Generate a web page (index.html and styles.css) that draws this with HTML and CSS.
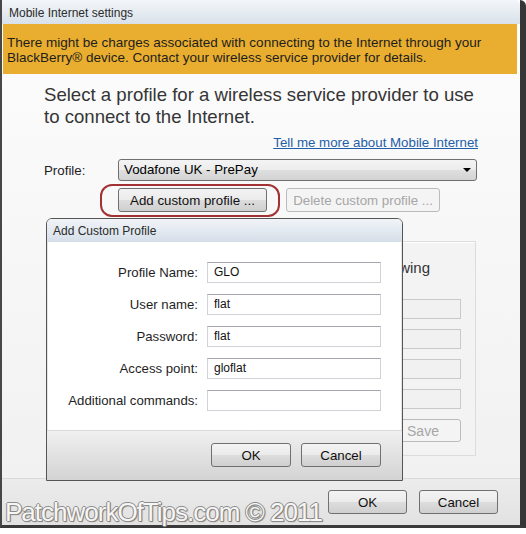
FILE: index.html
```html
<!DOCTYPE html>
<html lang="en">
<head>
    <meta charset="UTF-8">
    <title>Mobile Internet settings</title>
    <link rel="stylesheet" href="styles.css">
</head>
<body>

<div class="window">
    <div class="titlebar">Mobile Internet settings</div>
    <div class="notice">There might be charges associated with connecting to the Internet through your<br>BlackBerry® device. Contact your wireless service provider for details.</div>

    <div class="content">
        <h1>Select a profile for a wireless service provider to use<br>to connect to the Internet.</h1>
        <div class="more"><a href="#">Tell me more about Mobile Internet</a></div>

        <div class="profile-row">
            <span class="profile-label">Profile:</span>
            <div class="select">Vodafone UK - PrePay<span class="arrow"></span></div>
        </div>

        <div class="profile-actions">
            <span class="highlight"><button class="btn btn-add">Add custom profile ...</button></span>
            <button class="btn btn-delete" disabled>Delete custom profile ...</button>
        </div>

        <div class="group">
            <div class="group-intro">Type the following</div>
            <div class="group-field"></div>
            <div class="group-field"></div>
            <div class="group-field"></div>
            <div class="group-field"></div>
            <button class="btn btn-save" disabled>Save</button>
        </div>
    </div>

    <div class="footer">
        <button class="btn btn-footer">OK</button>
        <button class="btn btn-footer">Cancel</button>
    </div>

    <div class="watermark">PatchworkOfTips.com © 2011</div>

    <div class="dialog">
        <div class="dialog-title">Add Custom Profile</div>
        <div class="dialog-body">
            <div class="row"><label>Profile Name:</label><div class="input">GLO</div></div>
            <div class="row"><label>User name:</label><div class="input">flat</div></div>
            <div class="row"><label>Password:</label><div class="input">flat</div></div>
            <div class="row"><label>Access point:</label><div class="input">gloflat</div></div>
            <div class="row"><label>Additional commands:</label><div class="input"></div></div>
        </div>
        <div class="dialog-footer">
            <button class="btn btn-dialog">OK</button>
            <button class="btn btn-dialog">Cancel</button>
        </div>
    </div>
</div>

</body>
</html>
```

FILE: styles.css
```css
body { margin: 0; background: #fff; font-family: "Liberation Sans", Arial, sans-serif; color: #1e1e1e; }

.window { position: relative; width: 518px; border-left: 2px solid #474747; border-right: 6px solid #363636; border-bottom: 3px solid #3a3a3a; border-top-right-radius: 6px; background: linear-gradient(#fdfdfd, #f0f0f0); }

.titlebar { height: 24px; line-height: 27px; padding-left: 7px; font-size: 12px; color: #2b2b2b; background: linear-gradient(#f3f6f9, #d8e1ea); border-top-right-radius: 5px; }

.notice { height: 50px; box-sizing: border-box; margin: 0 3px 0 1px; padding: 11px 0 0 4px; font-size: 13.5px; line-height: 15px; color: #1d1d1d; background: #e9ae2f; }

.content { padding: 10px 42px 0 42px; }
h1 { margin: 0; font-size: 18.6px; font-weight: normal; line-height: 22px; color: #353535; }
.more { margin-top: 7px; text-align: right; font-size: 13.3px; line-height: 16px; }
.more a { color: #1f5ea8; }

.profile-row { margin-top: 8px; display: flex; align-items: center; height: 22px; }
.profile-label { width: 74px; font-size: 13.3px; }
.select { position: relative; flex: 1; height: 22px; box-sizing: border-box; margin-right: 1px; padding-left: 5px; font-size: 13.3px; line-height: 20px; color: #000; border: 1px solid #707070; border-radius: 3px; background: linear-gradient(#f4f4f4 0%, #ececec 50%, #dfdfdf 51%, #d3d3d3 100%); }
.arrow { position: absolute; right: 5px; top: 8px; border-left: 4px solid transparent; border-right: 4px solid transparent; border-top: 4px solid #000; }

.profile-actions { margin-top: 7px; padding-left: 74px; display: flex; gap: 19px; height: 24px; }
.highlight { position: relative; }
.highlight::after { content: ""; position: absolute; left: -18px; right: -13px; top: -4px; bottom: -5px; border: 2px solid #a23232; border-radius: 12px; }

.btn { height: 24px; padding: 0; font-family: "Liberation Sans", Arial, sans-serif; font-size: 13.3px; color: #111; border: 1px solid #707070; border-radius: 3px; background: linear-gradient(#f3f3f3 0%, #ebebeb 50%, #dddddd 51%, #cfcfcf 100%); }
.btn:disabled { color: #a6a6a6; border-color: #b8bcbf; background: #f4f4f4; }
.btn-add { width: 149px; }
.btn-delete { width: 154px; }

.group { margin: 29px 2px 0 56px; height: 215px; box-sizing: border-box; padding: 17px 14px 0 0; display: flex; flex-direction: column; align-items: flex-end; gap: 10px; border: 1px solid #dcdcdc; box-shadow: inset 1px 1px 0 #fff; background: #f3f3f3; }
.group-intro { align-self: stretch; text-align: right; padding-right: 31px; margin-bottom: 12px; font-size: 15px; line-height: 18px; color: #333; }
.group-field { width: 200px; height: 20px; box-sizing: border-box; border: 1px solid #c9c9c9; background: #f1f1f1; }
.btn-save { width: 76px; height: 23px; font-size: 14px; }

.footer { margin-top: 22px; height: 47px; box-sizing: border-box; padding: 11px 22px 0 0; display: flex; justify-content: flex-end; gap: 12px; background: linear-gradient(#ececec, #e2e2e2); border-top: 1px solid #dadada; }
.btn-footer { width: 79px; }

.watermark { position: absolute; left: 3px; top: 499px; font-size: 26px; line-height: 26px; letter-spacing: -1px; color: #f6f6f6; text-shadow: 1px 0 0 #8c8c8c, -1px 0 0 #8c8c8c, 0 1px 0 #8c8c8c, 0 -1px 0 #8c8c8c, 1px 1px 1px #666; }

.dialog { position: absolute; left: 44px; top: 218px; width: 357px; height: 263px; box-sizing: border-box; display: flex; flex-direction: column; border: 1px solid #555; border-radius: 6px 6px 0 0; background: #fff; }
.dialog-title { height: 23px; line-height: 25px; padding-left: 6px; font-size: 12px; color: #2b2b2b; background: linear-gradient(#f1f4f8, #d5dfe9); border-radius: 5px 5px 0 0; }
.dialog-body { flex: 1; padding-top: 20px; display: flex; flex-direction: column; gap: 11px; border-left: 1px solid #e4e4e4; border-right: 1px solid #e4e4e4; }
.row { display: flex; align-items: center; gap: 9px; height: 21px; }
.row label { width: 150px; text-align: right; font-size: 13.2px; color: #1e1e1e; }
.input { width: 174px; height: 21px; box-sizing: border-box; padding-left: 6px; font-size: 12px; line-height: 19px; color: #111; border: 1px solid #d0d4d8; border-top-color: #a3a6aa; }
.dialog-footer { height: 50px; box-sizing: border-box; padding: 12px 21px 0 0; display: flex; justify-content: flex-end; gap: 10px; border-top: 1px solid #d9d9d9; background: linear-gradient(#f0f0f0, #d3d3d3); }
.btn-dialog { width: 80px; }
```
